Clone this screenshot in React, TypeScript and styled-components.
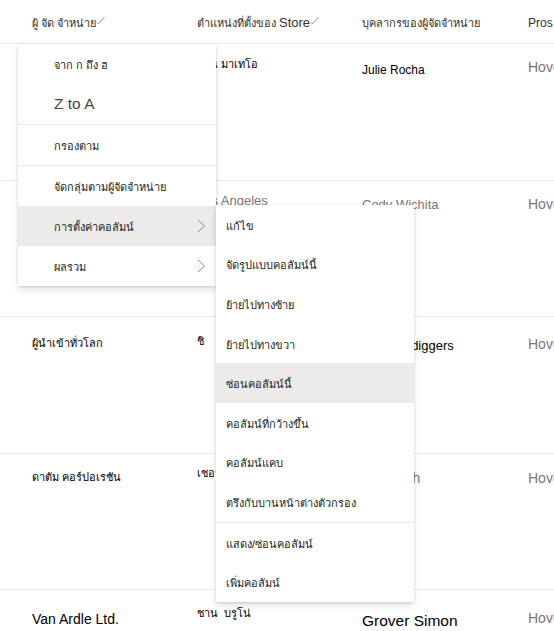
import React from 'react';
import styled, { createGlobalStyle } from 'styled-components';

const GlobalStyle = createGlobalStyle`
  html, body {
    margin: 0;
    padding: 0;
    background: #ffffff;
  }
  body {
    width: 554px;
    height: 631px;
    overflow: hidden;
    font-family: 'Liberation Sans', Arial, 'Noto Sans', sans-serif;
    color: #201f1e;
  }
`;

type Tone = 'dark' | 'muted';

// mid = distance from the row's top edge to the middle of the text line
interface Cell {
  text: string;
  size: number;
  tone: Tone;
  mid: number;
}

const rows: Cell[][] = [
  [
    { text: 'คอนโทโซ', size: 11, tone: 'dark', mid: 24 },
    { text: 'ฮวน\u00a0มาเทโอ', size: 11, tone: 'dark', mid: 22 },
    { text: 'Julie Rocha', size: 12, tone: 'dark', mid: 27 },
    { text: 'Hover', size: 14, tone: 'muted', mid: 24 },
  ],
  [
    { text: 'แอดเวนเจอร์', size: 11, tone: 'dark', mid: 24 },
    { text: 'Los Angeles', size: 13, tone: 'muted', mid: 21 },
    { text: 'Cody Wichita', size: 13, tone: 'muted', mid: 25 },
    { text: 'Hover', size: 14, tone: 'muted', mid: 25 },
  ],
  [
    { text: 'ผู้นำเข้าทั่วโลก', size: 11, tone: 'dark', mid: 28 },
    { text: 'ชิ', size: 11, tone: 'dark', mid: 26 },
    { text: 'Golden\u00a0\u00a0diggers', size: 13, tone: 'dark', mid: 30 },
    { text: 'Hover', size: 14, tone: 'muted', mid: 28 },
  ],
  [
    { text: 'ดาตัม คอร์ปอเรชัน', size: 11, tone: 'dark', mid: 25.5 },
    { text: 'เชอร์', size: 11, tone: 'dark', mid: 21.5 },
    { text: 'Jo\u00a0\u00a0Smith', size: 14, tone: 'muted', mid: 25.5 },
    { text: 'Hover', size: 14, tone: 'muted', mid: 25.5 },
  ],
  [
    { text: 'Van Ardle Ltd.', size: 14, tone: 'dark', mid: 30 },
    { text: 'ชาน\u00a0\u00a0บรูโน่', size: 11, tone: 'dark', mid: 25 },
    { text: 'Grover Simon', size: 15.5, tone: 'dark', mid: 32 },
    { text: 'Hover', size: 14, tone: 'muted', mid: 29 },
  ],
];

interface MenuEntry {
  label: string;
  large?: boolean;
  active?: boolean;
  submenu?: boolean;
  dividerBefore?: boolean;
}

const mainMenu: MenuEntry[] = [
  { label: 'จาก ก ถึง ฮ' },
  { label: 'Z to A', large: true },
  { label: 'กรองตาม', dividerBefore: true },
  { label: 'จัดกลุ่มตามผู้จัดจำหน่าย', dividerBefore: true },
  { label: 'การตั้งค่าคอลัมน์', active: true, submenu: true },
  { label: 'ผลรวม', submenu: true },
];

const columnMenu: MenuEntry[] = [
  { label: 'แก้ไข' },
  { label: 'จัดรูปแบบคอลัมน์นี้' },
  { label: 'ย้ายไปทางซ้าย' },
  { label: 'ย้ายไปทางขวา' },
  { label: 'ซ่อนคอลัมน์นี้', active: true },
  { label: 'คอลัมน์ที่กว้างขึ้น' },
  { label: 'คอลัมน์แคบ' },
  { label: 'ตรึงกับบานหน้าต่างตัวกรอง' },
  { label: 'แสดง/ซ่อนคอลัมน์', dividerBefore: true },
  { label: 'เพิ่มคอลัมน์' },
];

const SortMark = () => (
  <MarkSvg width="9" height="9" viewBox="0 0 9 9">
    <path d="M1 6.5 L2.4 8 L8.5 1" fill="none" stroke="#8a8886" strokeWidth="0.9" />
  </MarkSvg>
);

const Chevron = () => (
  <svg width="9" height="14" viewBox="0 0 9 14">
    <path d="M1 1 L7.5 7 L1 13" fill="none" stroke="#8a8886" strokeWidth="1" />
  </svg>
);

const Menu: React.FC<{ items: MenuEntry[]; inset: number; itemHeight: number }> = ({
  items,
  inset,
  itemHeight,
}) => (
  <>
    {items.map((item) => (
      <React.Fragment key={item.label}>
        {item.dividerBefore && <Divider />}
        <MenuItem active={item.active} inset={inset} h={itemHeight}>
          <MenuLabel large={item.large}>{item.label}</MenuLabel>
          {item.submenu && <Chevron />}
        </MenuItem>
      </React.Fragment>
    ))}
  </>
);

const App: React.FC = () => {
  return (
    <Page>
      <GlobalStyle />
      <Table>
        <HeaderRow>
          <HeaderCell first>
            ผู้ จัด จำหน่าย
            <SortMark />
          </HeaderCell>
          <HeaderCell>
            ตำแหน่งที่ตั้งของ <LatinWord>Store</LatinWord>
            <SortMark />
          </HeaderCell>
          <HeaderCell>บุคลากรของผู้จัดจำหน่าย</HeaderCell>
          <HeaderCell>
            <LatinWord>Pros</LatinWord>
          </HeaderCell>
        </HeaderRow>
        {rows.map((row, i) => (
          <DataRow key={i}>
            {row.map((cell, j) => (
              <DataCell key={j} first={j === 0} size={cell.size} tone={cell.tone} mid={cell.mid}>
                {cell.text}
              </DataCell>
            ))}
          </DataRow>
        ))}
      </Table>

      <ContextMenu>
        <Menu items={mainMenu} inset={36} itemHeight={40} />
      </ContextMenu>
      <SubMenu>
        <Menu items={columnMenu} inset={10} itemHeight={39.6} />
      </SubMenu>
    </Page>
  );
};

const Page = styled.div`
  position: relative;
  width: 554px;
  height: 631px;
  overflow: hidden;
  background: #ffffff;
`;

const Table = styled.div`
  display: flex;
  flex-direction: column;
`;

const columns = `197px 165px 166px 1fr`;

const HeaderRow = styled.div`
  display: grid;
  grid-template-columns: ${columns};
  height: 44px;
  border-bottom: 1px solid #edebe9;
  box-sizing: border-box;
`;

const HeaderCell = styled.div<{ first?: boolean }>`
  display: flex;
  align-items: center;
  padding-left: ${(p) => (p.first ? '32px' : '0')};
  padding-top: 2px;
  font-size: 11px;
  color: #323130;
  white-space: nowrap;
  overflow: hidden;
`;

const LatinWord = styled.span`
  font-size: 13px;
  margin-left: 3px;
  &:only-child {
    margin-left: 0;
    font-size: 12px;
  }
`;

const MarkSvg = styled.svg`
  margin-top: -4px;
`;

const DataRow = styled.div`
  display: grid;
  grid-template-columns: ${columns};
  height: 136.5px;
  border-bottom: 1px solid #edebe9;
  box-sizing: border-box;
`;

const DataCell = styled.div<{ first?: boolean; size: number; tone: Tone; mid: number }>`
  padding-left: ${(p) => (p.first ? '32px' : '0')};
  padding-top: ${(p) => p.mid - p.size * 0.6 - 1}px;
  font-size: ${(p) => p.size}px;
  line-height: 1.2;
  color: ${(p) => (p.tone === 'muted' ? '#797775' : '#000000')};
  white-space: nowrap;
  overflow: hidden;
`;

const menuShadow = `
  box-shadow: 0 3.2px 7.2px rgba(0, 0, 0, 0.13), 0 0.6px 1.8px rgba(0, 0, 0, 0.11);
`;

const ContextMenu = styled.div`
  position: absolute;
  left: 18px;
  top: 44px;
  width: 198px;
  background: #ffffff;
  display: flex;
  flex-direction: column;
  ${menuShadow}
`;

const SubMenu = styled.div`
  position: absolute;
  left: 216px;
  top: 205px;
  width: 198px;
  background: #ffffff;
  display: flex;
  flex-direction: column;
  ${menuShadow}
`;

const MenuItem = styled.div<{ active?: boolean; inset: number; h: number }>`
  display: flex;
  align-items: center;
  justify-content: space-between;
  height: ${(p) => p.h}px;
  padding: 0 10px 0 ${(p) => p.inset}px;
  background: ${(p) => (p.active ? '#edebe9' : 'transparent')};
  box-sizing: border-box;
`;

const MenuLabel = styled.span<{ large?: boolean }>`
  font-size: ${(p) => (p.large ? '15.5px' : '11px')};
  padding-top: ${(p) => (p.large ? '0' : '2px')};
  color: ${(p) => (p.large ? '#484644' : '#201f1e')};
  white-space: nowrap;
`;

const Divider = styled.div`
  height: 1px;
  background: #edebe9;
`;

export default App;
